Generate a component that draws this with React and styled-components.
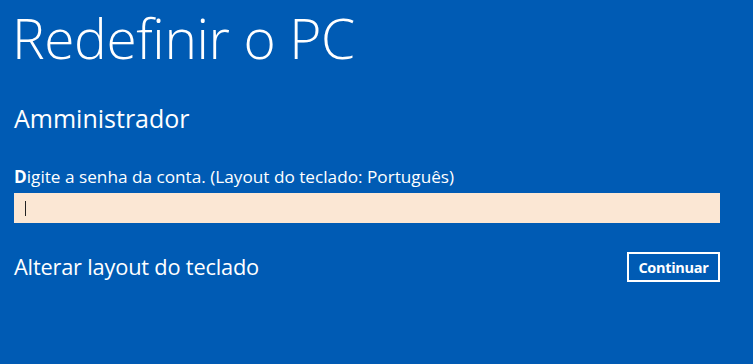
import React from 'react';
import styled, { createGlobalStyle } from 'styled-components';

const GlobalStyle = createGlobalStyle`
  html, body {
    margin: 0;
    padding: 0;
    background: #005bb4;
  }
  body {
    font-family: "Open Sans", "Noto Sans", sans-serif;
    color: #fff;
  }
`;

const Screen = styled.div`
  width: 753px;
  height: 364px;
  background: #005bb4;
  padding: 0 33px 0 14px;
  box-sizing: border-box;
  display: flex;
  flex-direction: column;
  overflow: hidden;
`;

const Title = styled.h1`
  margin: 3px 0 0 -2px;
  font-weight: 300;
  font-size: 55px;
  line-height: 70px;
  letter-spacing: -0.4px;
`;

const UserName = styled.h2`
  margin: 28px 0 0 0;
  font-weight: 400;
  font-size: 25px;
  line-height: 34px;
`;

const Label = styled.label`
  margin-top: 30px;
  font-size: 17.2px;
  line-height: 24px;
  b {
    font-weight: 700;
  }
`;

const PasswordBox = styled.div`
  margin-top: 4px;
  height: 30px;
  background: #fbe7d4;
  display: flex;
  align-items: center;
  padding-left: 11px;
`;

const Caret = styled.span`
  width: 1px;
  height: 15px;
  background: #222;
`;

const Footer = styled.div`
  margin-top: 29px;
  display: flex;
  align-items: center;
  justify-content: space-between;
`;

const LinkText = styled.span`
  font-size: 21.8px;
  line-height: 28px;
  font-weight: 400;
  letter-spacing: -0.2px;
`;

const Button = styled.button`
  width: 93px;
  height: 30px;
  border: 2px solid #fff;
  background: transparent;
  color: #fff;
  font-family: "Open Sans", sans-serif;
  font-weight: 700;
  font-size: 14.5px;
  padding: 0;
  letter-spacing: -0.3px;
`;

export default function App() {
  return (
    <>
      <GlobalStyle />
      <Screen>
        <Title>Redefinir o PC</Title>
        <UserName>Amministrador</UserName>
        <Label><b>D</b>igite a senha da conta. (Layout do teclado: Português)</Label>
        <PasswordBox>
          <Caret />
        </PasswordBox>
        <Footer>
          <LinkText>Alterar layout do teclado</LinkText>
          <Button>Continuar</Button>
        </Footer>
      </Screen>
    </>
  );
}
